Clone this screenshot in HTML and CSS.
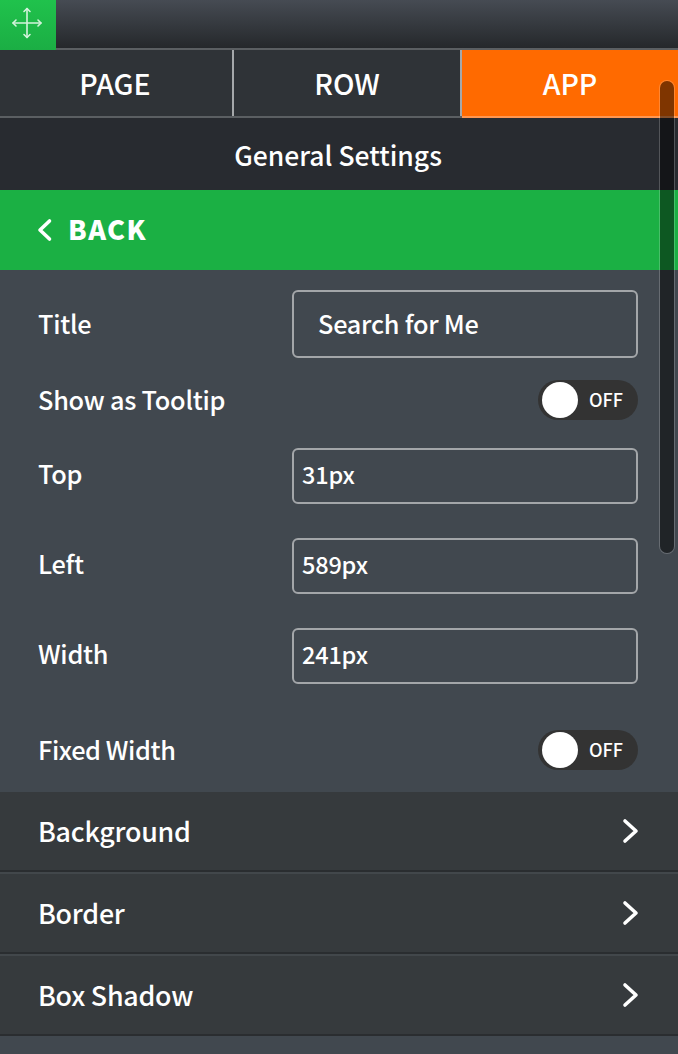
FILE: index.html
```html
<!DOCTYPE html>
<html lang="en">
<head>
<meta charset="utf-8">
<title>General Settings</title>
<link rel="stylesheet" href="styles.css">
</head>
<body>
<div class="panel">
  <div class="topbar">
    <div class="handle">
      <svg class="move" width="32" height="34" viewBox="0 0 32 34" fill="none" stroke="#d4f3dc" stroke-width="1.6" stroke-linecap="round" stroke-linejoin="round">
        <path d="M16 2.5V31.5M2 17H30"/>
        <path d="M13 5.5L16 2.5L19 5.5M13 28.5L16 31.5L19 28.5M5 14L2 17L5 20M27 14L30 17L27 20"/>
      </svg>
    </div>
  </div>
  <div class="tabs">
    <div class="tab tab-page">PAGE</div>
    <div class="tab tab-row">ROW</div>
    <div class="tab tab-app">APP</div>
  </div>
  <div class="heading">General Settings</div>
  <div class="back">
    <svg width="16" height="24" viewBox="0 0 16 24" fill="none" stroke="#fff" stroke-width="3.6" stroke-linecap="round" stroke-linejoin="round"><path d="M12.5 3L3 12L12.5 21"/></svg>
    <span>BACK</span>
  </div>
  <div class="form">
    <div class="row row-title"><span>Title</span><div class="input input-lg">Search for Me</div></div>
    <div class="row row-toggle"><span>Show as Tooltip</span><div class="toggle"><i class="knob"></i><b>OFF</b></div></div>
    <div class="row row-field"><span>Top</span><div class="input">31px</div></div>
    <div class="row row-field"><span>Left</span><div class="input">589px</div></div>
    <div class="row row-field"><span>Width</span><div class="input">241px</div></div>
    <div class="row row-toggle row-fixed"><span>Fixed Width</span><div class="toggle"><i class="knob"></i><b>OFF</b></div></div>
  </div>
  <div class="acc">Background<svg width="18" height="26" viewBox="0 0 18 26" fill="none" stroke="#fff" stroke-width="3.6" stroke-linecap="round" stroke-linejoin="round"><path d="M4 3L15 13L4 23"/></svg></div>
  <div class="acc">Border<svg width="18" height="26" viewBox="0 0 18 26" fill="none" stroke="#fff" stroke-width="3.6" stroke-linecap="round" stroke-linejoin="round"><path d="M4 3L15 13L4 23"/></svg></div>
  <div class="acc">Box Shadow<svg width="18" height="26" viewBox="0 0 18 26" fill="none" stroke="#fff" stroke-width="3.6" stroke-linecap="round" stroke-linejoin="round"><path d="M4 3L15 13L4 23"/></svg></div>
  <div class="scrollbar"></div>
</div>
</body>
</html>
```
FILE: styles.css
```css
* { box-sizing: border-box; }
html, body { margin: 0; height: 100%; }
body { background: #41484f; overflow: hidden; }
.panel {
  position: relative;
  width: 678px;
  height: 1054px;
  background: #41484f;
  color: #fff;
  font-family: "Noto Sans CJK SC", "Noto Sans", sans-serif;
  font-size: 25.3px;
  font-weight: 500;
  letter-spacing: -0.25px;
  overflow: hidden;
}
.topbar {
  height: 48px;
  background: linear-gradient(#464b53, #25282b);
}
.handle {
  width: 56px;
  height: 50px;
  padding: 6px 0 0 11px;
  background: linear-gradient(#20c24c, #1bae44);
  position: relative;
  z-index: 1;
}
.move { display: block; }
.tabs {
  display: flex;
  height: 70px;
  background: #2f3337;
  border-top: 2px solid #5b5f62;
  border-bottom: 2px solid #5b5f62;
  font-size: 28.5px;
  letter-spacing: 0;
}
.tab { display: flex; align-items: center; justify-content: center; line-height: 40px; padding-bottom: 1px; }
.tab-page { width: 234px; padding-right: 2px; border-right: 2px solid #a5a8aa; }
.tab-row { width: 228px; border-right: 2px solid #a5a8aa; }
.tab-app { flex: 1; background: #ff6a00; box-shadow: 0 2px 0 #ff9650; }
.heading {
  height: 72px;
  padding: 1px 2px 0 0;
  background: #282b30;
  text-align: center;
  font-size: 26.5px;
  letter-spacing: 0;
  line-height: 72px;
}
.back {
  display: flex;
  align-items: center;
  gap: 15px;
  height: 80px;
  padding-left: 37px;
  background: #1bb044;
  font-size: 27px;
  font-weight: 900;
  letter-spacing: 1.4px;
  line-height: 40px;
}
.back span { margin-bottom: 2px; }
.form { height: 522px; padding: 20px 40px 0 38px; }
.row { display: flex; align-items: center; justify-content: space-between; line-height: 36px; }
.row > span { margin-bottom: 2px; }
.row-title { height: 68px; }
.row-toggle { height: 40px; margin-top: 22px; }
.row-field { height: 56px; margin-top: 34px; }
.row-field > span { margin-bottom: 6px; }
.row-toggle + .row-field { margin-top: 28px; }
.row-fixed { margin-top: 46px; letter-spacing: -0.4px; }
.input {
  width: 346px;
  height: 56px;
  padding-left: 8px;
  border: 2px solid #a3a6a9;
  border-radius: 6px;
  font-size: 23.5px;
  letter-spacing: -0.2px;
  line-height: 48px;
}
.input-lg { height: 68px; padding-left: 24px; font-size: 25.3px; letter-spacing: -0.25px; line-height: 62px; }
.toggle {
  display: flex;
  align-items: center;
  width: 100px;
  height: 40px;
  padding-left: 4px;
  border-radius: 20px;
  background: #333;
}
.knob { width: 36px; height: 36px; border-radius: 50%; background: #fff; }
.toggle b { margin-left: 11px; margin-bottom: 2px; font-size: 18px; font-weight: 500; letter-spacing: 0; line-height: 24px; }
.acc {
  display: flex;
  align-items: center;
  justify-content: space-between;
  height: 80px;
  padding: 0 38px;
  background: #363a3d;
  border-bottom: 2px solid #2a2d30;
  font-size: 26.8px;
  letter-spacing: -0.25px;
  line-height: 40px;
}
.acc svg { margin-right: 1px; }
.acc + .acc { border-top: 2px solid #42474b; height: 82px; }
.scrollbar {
  position: absolute;
  left: 660px;
  top: 81px;
  width: 14px;
  height: 472px;
  border-radius: 7px;
  background: rgba(0, 0, 0, .5);
  box-shadow: 0 0 0 1px rgba(255, 255, 255, .2);
}
```
